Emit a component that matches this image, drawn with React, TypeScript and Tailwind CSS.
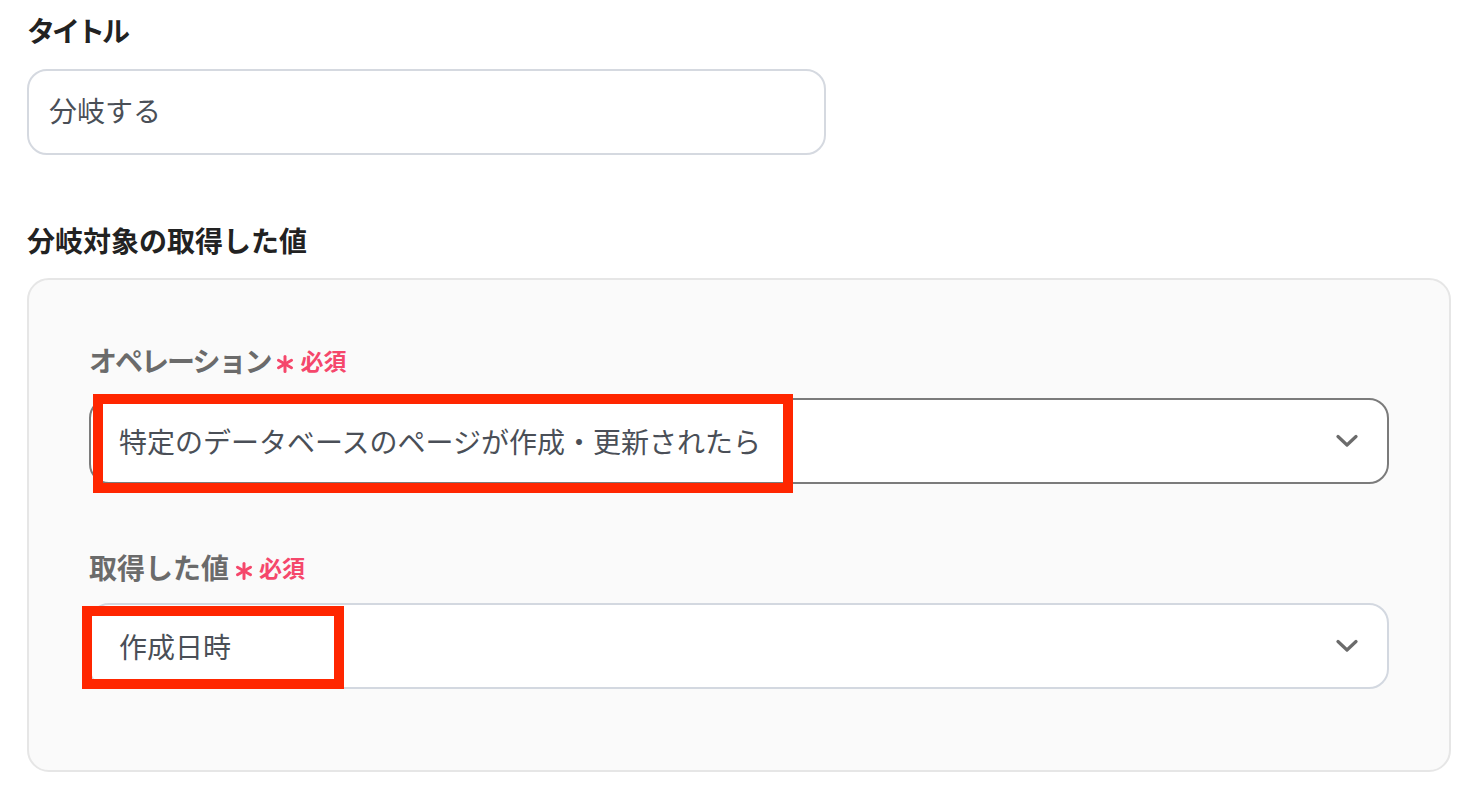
import React from 'react'

const FONT = { fontFamily: '"Noto Sans CJK JP", "Noto Sans", sans-serif' }

function Chevron() {
  return (
    <svg width="22" height="14" viewBox="0 0 22 14" fill="none" className="shrink-0">
      <path d="M2 2.5 L11 11 L20 2.5" stroke="#6b6b6b" strokeWidth="3.2" strokeLinecap="round" strokeLinejoin="round" />
    </svg>
  )
}

function Asterisk() {
  return (
    <svg width="18" height="18" viewBox="0 0 18 18" className="mt-[8px]">
      <g stroke="#f5476b" strokeWidth="3" strokeLinecap="round">
        <line x1="9" y1="1.5" x2="9" y2="16.5" />
        <line x1="2.5" y1="5.25" x2="15.5" y2="12.75" />
        <line x1="2.5" y1="12.75" x2="15.5" y2="5.25" />
      </g>
    </svg>
  )
}

function FieldLabel({ text, tight }: { text: string; tight?: boolean }) {
  return (
    <div className="flex h-[40px] items-center gap-[6px]">
      <span className={`text-[28px] font-bold leading-[40px] text-[#6b6b6b] ${tight ? 'tracking-[-2px]' : ''}`}>{text}</span>
      <Asterisk />
      <span className="text-[23px] font-bold leading-[40px] text-[#f5476b]">必須</span>
    </div>
  )
}

function SelectBox({ value, focused }: { value: string; focused?: boolean }) {
  return (
    <div
      className={`flex h-[86px] items-center justify-between rounded-[20px] border-2 bg-white pl-[28px] pr-[29px] ${
        focused ? 'border-[#7b7b7b]' : 'border-[#d3d8e0]'
      }`}
    >
      <span className="text-[28px] leading-none text-[#4a4f57]">{value}</span>
      <Chevron />
    </div>
  )
}

export default function App() {
  return (
    <div className="relative min-h-[790px] w-[1472px] bg-white pl-[27px] pt-[10px]" style={FONT}>
      <div className="h-[40px] text-[28px] font-bold leading-[40px] tracking-[-3px] text-[#222222]">タイトル</div>
      <div className="mt-[19px] flex h-[86px] w-[799px] items-center rounded-[20px] border-2 border-[#d5d9e0] bg-white pb-[5px] pl-[20px]">
        <span className="text-[28px] leading-none text-[#4a4f57]">分岐する</span>
      </div>

      <div className="mt-[65px] h-[40px] text-[28px] font-bold leading-[40px] text-[#222222]">分岐対象の取得した値</div>

      <div className="mt-[18px] w-[1424px] rounded-[22px] border-2 border-[#e6e6e6] bg-[#fafafa] px-[60px] pb-[81px] pt-[60px]">
        <FieldLabel text="オペレーション" tight />
        <div className="mt-[18px]">
          <SelectBox value="特定のデータベースのページが作成・更新されたら" focused />
        </div>
        <div className="mt-[63px]">
          <FieldLabel text="取得した値" />
        </div>
        <div className="mt-[16px]">
          <SelectBox value="作成日時" />
        </div>
      </div>

      {/* annotation boxes over the selects */}
      <div className="absolute left-[93px] top-[394px] h-[99px] w-[700px] border-[10px] border-[#ff2600]" />
      <div className="absolute left-[82px] top-[606px] h-[83px] w-[262px] border-[10px] border-[#ff2600]" />
    </div>
  )
}
